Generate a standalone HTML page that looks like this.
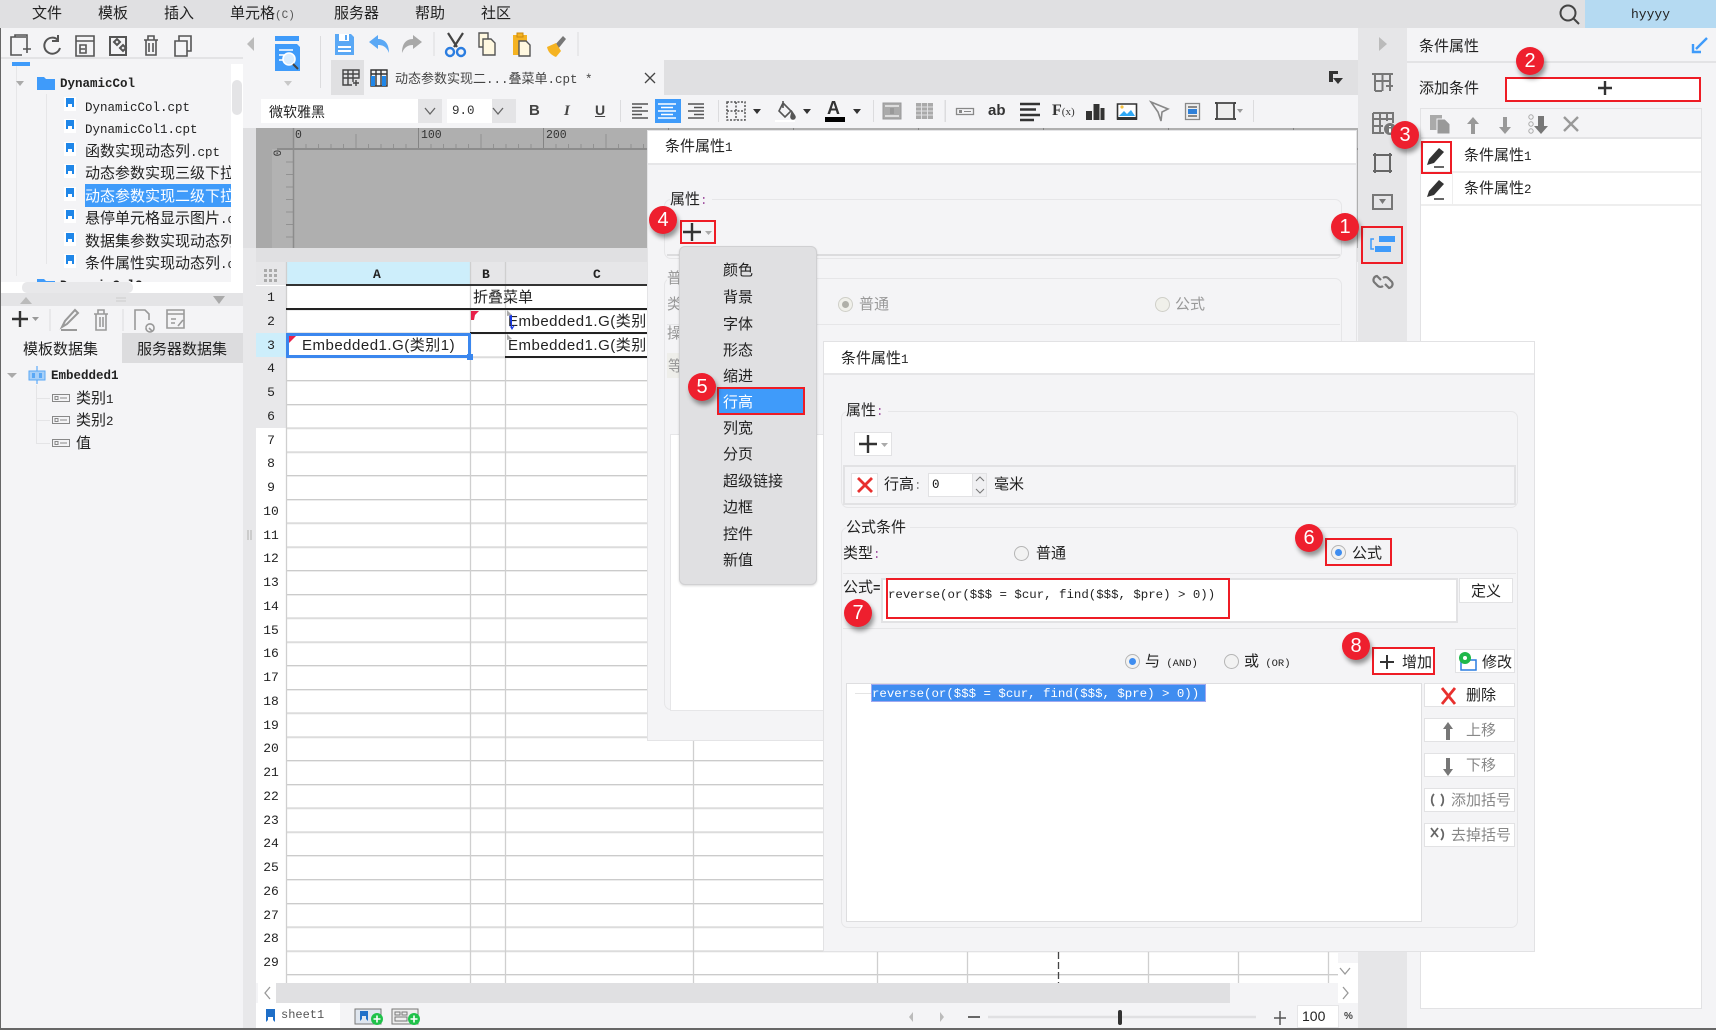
<!DOCTYPE html>
<html lang="zh">
<head>
<meta charset="utf-8">
<title>条件属性</title>
<style>
html,body{margin:0;padding:0;background:#f4f4f6;}
body{position:relative;width:1716px;height:1030px;overflow:hidden;font-family:"Liberation Sans","Noto Sans CJK SC",sans-serif;color:#222;font-size:15px;}
.a{position:absolute;box-sizing:border-box;}
.t{position:absolute;white-space:nowrap;line-height:20px;height:20px;margin-top:1px;}
.m{font-family:"Liberation Mono","Noto Sans CJK SC",monospace;font-size:12.5px;}
svg{position:absolute;overflow:visible;}
.tree{color:#222;}
.mk{position:absolute;width:28px;height:28px;border-radius:50%;background:#ee1f2e;color:#fff;font:20px/28px "Liberation Sans",sans-serif;text-align:center;box-shadow:2px 4px 5px rgba(0,0,0,.4);}
.rb{position:absolute;box-sizing:border-box;border:2px solid #ee1c25;}
.r{position:absolute;box-sizing:border-box;width:15px;height:15px;border-radius:50%;border:1px solid #b5b5b5;background:#f2f2f2;}
.r.on::after{content:"";position:absolute;left:3px;top:3px;width:7px;height:7px;border-radius:50%;background:#3f8df0;}
.r.off{border-color:#cfcfc8;background:#f0f0ea;}
.r.off.on::after{background:#b0b0a8;}
.fs{position:absolute;box-sizing:border-box;border:1px solid #e6e6e8;border-radius:7px;}
.btn{position:absolute;box-sizing:border-box;background:#fff;border:1px solid #e2e2e4;}
.sep{position:absolute;width:1px;background:#dcdcde;}
.arrow{position:absolute;width:0;height:0;border-left:4px solid transparent;border-right:4px solid transparent;border-top:5px solid #333;}
.menu div{position:absolute;left:43px;white-space:nowrap;line-height:20px;}
.rn{height:23.76px;line-height:23.76px;text-align:center;font:13px/23.76px "Liberation Mono",monospace;color:#222;}
</style>
</head>
<body>
<!-- menu bar -->
<div class="a" style="left:0;top:0;width:1716px;height:28px;background:#e0e0e2"></div>
<div class="t" style="left:32px;top:3px">文件</div>
<div class="t" style="left:98px;top:3px">模板</div>
<div class="t" style="left:164px;top:3px">插入</div>
<div class="t" style="left:230px;top:3px">单元格<span class="m" style="color:#555;font-size:11px">(C)</span></div>
<div class="t" style="left:334px;top:3px">服务器</div>
<div class="t" style="left:415px;top:3px">帮助</div>
<div class="t" style="left:481px;top:3px">社区</div>
<svg style="left:1558px;top:3px" width="24" height="22" fill="none" stroke="#444" stroke-width="2"><circle cx="10" cy="10" r="7.5"/><path d="M15 15l6 6"/></svg>
<div class="a" style="left:1585px;top:0;width:131px;height:28px;background:#b5daf2"></div>
<div class="t m" style="left:1631px;top:4px;font-size:13px;color:#222">hyyyy</div>

<!-- left panel -->
<div class="a" style="left:0;top:28px;width:243px;height:1002px;background:#f4f4f6;border-left:1px solid #666"></div>
<svg style="left:0;top:28px" width="243" height="36" fill="none" stroke="#555" stroke-width="1.6">
<g transform="translate(-2,0)"><path d="M28 9H13v18h11M17 9v-2h12v10M25 21h8M29 17v8"/>
<path d="M60 12a8 8 0 1 0 2 8M60 7v6h-6" stroke-width="2"/></g>
<path d="M76 8h18v20H76zM76 13h18M80 17h6v8h-6zM80 21h5"/>
<path d="M110 9h16v18h-16zM114 14l3-3 3 3-3 3zM120 20l3-3 3 3-3 3z" stroke-width="2"/>
<path d="M144 12h14M148 12V8h6v4M146 12v15h10V12M149 15v9M153 15v9"/>
<path d="M175 13h12v15h-12zM179 13V8h12v15h-4"/>
</svg>
<div class="a" style="left:1px;top:57px;width:242px;height:2px;background:#e3e3e5"></div>
<div class="a" style="left:231px;top:64px;width:12px;height:229px;background:#fff"></div>
<div class="a" style="left:232px;top:80px;width:10px;height:35px;border-radius:5px;background:#e4e4e6"></div>

<div class="a tree" style="left:1px;top:59px;width:230px;height:223px;overflow:hidden">
  <div class="a" style="left:11px;top:3px;width:18px;height:4px;background:#3f9bfa"></div>
  <div class="a" style="left:15px;top:7px;width:1px;height:210px;background:#e6e6e8"></div>
  <div class="arrow" style="left:15px;top:22px;border-top-color:#aaa"></div>
  <svg style="left:36px;top:16px" width="18" height="15"><path d="M0 2h7l2 2h9v11H0z" fill="#3f9bfa"/></svg>
  <div class="t m" style="left:59px;top:14px;font-weight:bold">DynamicCol</div>
  <div class="a" style="left:45px;top:35px;width:1px;height:170px;background:#e6e6e8"></div>

  <div class="a" style="left:84px;top:125px;width:146px;height:23px;background:#3f9bfa"></div>

  <div class="t" style="left:84px;top:37px"><span class="m">DynamicCol.cpt</span></div>
  <div class="t" style="left:84px;top:59px"><span class="m">DynamicCol1.cpt</span></div>
  <div class="t" style="left:84px;top:82px">函数实现动态列<span class="m">.cpt</span></div>
  <div class="t" style="left:84px;top:104px">动态参数实现三级下拉</div>
  <div class="t" style="left:84px;top:127px;color:#fff">动态参数实现二级下拉</div>
  <div class="t" style="left:84px;top:149px">悬停单元格显示图片<span class="m">.cpt</span></div>
  <div class="t" style="left:84px;top:172px">数据集参数实现动态列</div>
  <div class="t" style="left:84px;top:194px">条件属性实现动态列<span class="m">.cpt</span></div>

  <svg style="left:62px;top:38px" width="16" height="180">
    <g id="fi"><path d="M1 0h12v14H1z" fill="#fff"/><path d="M3 1h8v9H9V7H5v3H3z" fill="#1f86e8"/></g>
    <use href="#fi" y="22"/><use href="#fi" y="45"/><use href="#fi" y="67"/><use href="#fi" y="90"/><use href="#fi" y="112"/><use href="#fi" y="135"/><use href="#fi" y="157"/>
  </svg>
  <svg style="left:36px;top:218px" width="18" height="6"><path d="M0 2h7l2 2h9v2H0z" fill="#3f9bfa"/></svg>
  <div class="t m" style="left:59px;top:216px;font-weight:bold">DynamicCol2</div>
</div>
<div class="a" style="left:1px;top:282px;width:230px;height:11px;background:#fff"></div>
<div class="a" style="left:22px;top:282px;width:111px;height:11px;border-radius:5px;background:#e8e8ea"></div>
<div class="a" style="left:1px;top:293px;width:242px;height:13px;background:#e4e4e6"></div>
<svg style="left:0;top:293px" width="243" height="13"><path d="M20 11l6-7 6 7z" fill="#bbb"/><path d="M213 3h12l-6 8z" fill="#aaa"/><path d="M116 5h10M116 8h10" stroke="#ccc"/></svg>
<svg style="left:0;top:306px" width="243" height="26" fill="none" stroke="#999" stroke-width="1.6">
<path d="M12 13h16M20 5v16" stroke="#333" stroke-width="2.4"/><path d="M32 11h7l-3.5 4z" fill="#999" stroke="none"/>
<path d="M50 3v22" stroke="#ddd" stroke-width="1"/>
<path d="M62 21l3-6 10-11 3 3-11 11zM61 24h16" stroke="#999" stroke-width="2"/>
<path d="M94 8h14M98 8V4h6v4M96 8v16h10V8M100 11v10M103 11v10"/>
<path d="M123 3v22" stroke="#ddd" stroke-width="1"/>
<path d="M135 24V4h10l4 4v6M146 22a4 4 0 1 0 0-.1M149 22l3 3"/>
<path d="M167 4h17v18h-17zM167 8h17M171 13h5M171 17h4M178 20l5-6"/>
</svg>
<div class="a" style="left:122px;top:333px;width:121px;height:30px;background:#dcdcde"></div>
<div class="t" style="left:23px;top:339px;font-size:15px">模板数据集</div>
<div class="t" style="left:137px;top:339px;font-size:15px">服务器数据集</div>
<div class="arrow" style="left:7px;top:373px;border-top-color:#aaa;border-left-width:5px;border-right-width:5px"></div>
<svg style="left:28px;top:366px" width="18" height="18"><path d="M9 0v18" stroke="#3f9bfa"/><path d="M1 5h16v9H1z" fill="#a8d0f8" stroke="#5aa8f5"/><path d="M4 7h3v5H4zM11 7h3v5h-3z" fill="#5aa8f5"/></svg>
<div class="t m" style="left:51px;top:365px;font-weight:bold">Embedded1</div>
<div class="a" style="left:36px;top:385px;width:1px;height:58px;background:#e4e4e6"></div>
<div class="a" style="left:36px;top:398px;width:14px;height:1px;background:#e4e4e6"></div>
<div class="a" style="left:36px;top:420px;width:14px;height:1px;background:#e4e4e6"></div>
<div class="a" style="left:36px;top:443px;width:14px;height:1px;background:#e4e4e6"></div>
<svg style="left:52px;top:393px" width="18" height="56" fill="none" stroke="#888"><path d="M.5 1.5h17v7H.5zM3 3.5h3v3H3zM8 5h7" /><path d="M.5 23.500h17v7H.5zM3 25.500h3v3H3zM8 27h7"/><path d="M.5 46.500h17v7H.5zM3 48.500h3v3H3zM8 50h7"/></svg>
<div class="t" style="left:76px;top:388px">类别<span class="m">1</span></div>
<div class="t" style="left:76px;top:410px">类别<span class="m">2</span></div>
<div class="t" style="left:76px;top:433px">值</div>

<!-- left collapse + top tool row -->
<div class="a" style="left:243px;top:28px;width:1116px;height:100px;background:#f4f4f6"></div>
<svg style="left:244px;top:36px" width="14" height="16"><path d="M10 1v14L3 8z" fill="#bbb"/></svg>
<svg style="left:272px;top:36px" width="32" height="52">
<path d="M3 0h24v5H3z" fill="#3f9bfa"/><path d="M3 8h22l3 3v24H3z" fill="#3f9bfa"/>
<path d="M7 14h14M7 19h7M7 24h5" stroke="#fff" stroke-width="1.6"/>
<circle cx="17" cy="23" r="6" fill="#d8ecff" stroke="#fff" stroke-width="1.6"/><path d="M21 28l5 5" stroke="#444" stroke-width="2"/>
<path d="M12 45h8l-4 5z" fill="#c8c8c8"/>
</svg>
<div class="sep" style="left:320px;top:36px;height:52px"></div>
<svg style="left:332px;top:32px" width="250" height="26">
<path d="M3 2h16l3 3v18H3z" fill="#5aa8f5"/><path d="M7 2h10v7H7z" fill="#fff"/><path d="M13 3h2v5h-2z" fill="#5aa8f5"/><path d="M6 14h13v2H6zM6 18h13v2H6z" fill="#fff"/>
<path d="M37 10l9-7v4c8 0 11 6 11 14-2-5-5-8-11-8v4z" fill="#5aa8f5"/>
<path d="M90 10l-9-7v4c-8 0-11 6-11 14 2-5 5-8 11-8v4z" fill="#a8a8a8"/>
<path d="M102 0v24" stroke="#ddd"/>
<path d="M116 1l9 14M131 1l-9 14" stroke="#444" stroke-width="2.2" fill="none"/><circle cx="118" cy="20" r="4" fill="none" stroke="#2b7de0" stroke-width="2.400"/><circle cx="129" cy="20" r="4" fill="none" stroke="#2b7de0" stroke-width="2.400"/>
<path d="M147 1h9v14h-9z" fill="#fff8e0" stroke="#555" stroke-width="1.4"/><path d="M151 7h8l4 4v12h-12z" fill="#fff8e0" stroke="#555" stroke-width="1.4"/>
<path d="M181 3h14v20h-14z" fill="#f5b322"/><path d="M185 1h6v4h-6z" fill="#f5b322" stroke="#c98a10"/><path d="M187 9h7l4 4v11h-11z" fill="#fff8e0" stroke="#555" stroke-width="1.4"/>
<path d="M222 14l9-10 3 3-8 10z" fill="#777"/><path d="M215 15l9-4 5 8-5 6c-5-2-8-5-9-10z" fill="#f5b322"/>
<path d="M246 0v24" stroke="#ddd"/>
</svg>

<!-- tab bar -->
<div class="a" style="left:331px;top:60px;width:1031px;height:35px;background:#e0e0e2"></div>
<div class="a" style="left:364px;top:60px;width:300px;height:35px;background:#f4f4f6"></div>
<svg style="left:342px;top:68px" width="54" height="20" fill="none" stroke="#444" stroke-width="1.400"><path d="M1 2h16v8H1zM1 6h16M6 2v15M11 2v12M1 10v7h9M11 15h6M14 12v6"/><path d="M29 2h16v16H29zM29 6h16M34 2v16M39 2v16" stroke="#333"/><path d="M29 8h4v10h-4zM40 8h4v10h-4z" fill="#1f86e8" stroke="none"/></svg>
<div class="t" style="left:395px;top:68px;font-size:13px;color:#444">动态参数实现二<span class="m">...</span>叠菜单<span class="m">.cpt *</span></div>
<svg style="left:645px;top:73px" width="10" height="10" stroke="#444" stroke-width="1.300"><path d="M0 0l10 10M10 0L0 10"/></svg>
<svg style="left:1328px;top:71px" width="16" height="14"><path d="M1 0h9v3H5v8H1z" fill="#333"/><path d="M5 7h10l-5 6z" fill="#333"/></svg>

<!-- format toolbar -->
<div class="a" style="left:243px;top:95px;width:1116px;height:33px;background:#f4f4f6"></div>
<div class="a" style="left:261px;top:99px;width:181px;height:24px;background:#fff"></div>
<div class="a" style="left:418px;top:99px;width:24px;height:24px;background:#e4e4e6"></div>
<div class="t" style="left:269px;top:101px;font-size:14px">微软雅黑</div>
<div class="a" style="left:447px;top:99px;width:69px;height:24px;background:#fff"></div>
<div class="a" style="left:492px;top:99px;width:24px;height:24px;background:#e4e4e6"></div>
<div class="t m" style="left:452px;top:100px;color:#333">9.0</div>
<svg style="left:424px;top:107px" width="90" height="8" fill="none" stroke="#666" stroke-width="1.300"><path d="M1 1l5 6 5-6M69 1l5 6 5-6"/></svg>
<div class="t" style="left:529px;top:100px;font:bold 15px/20px 'Liberation Sans';color:#444">B</div>
<div class="t" style="left:564px;top:100px;font:italic bold 15px/20px 'Liberation Serif';color:#444">I</div>
<div class="t" style="left:595px;top:99px;font:bold 14px/20px 'Liberation Sans';color:#444;text-decoration:underline">U</div>
<div class="sep" style="left:620px;top:100px;height:22px"></div>
<div class="a" style="left:655px;top:99px;width:26px;height:24px;background:#3f9bfa"></div>
<svg style="left:632px;top:103px" width="76" height="16" stroke-width="1.500" fill="none">
<path d="M0 1h16M0 4.500h10M0 8h16M0 11.500h10M0 15h16" stroke="#555"/>
<path d="M26 1h18M29 4.500h12M26 8h18M29 11.500h12M26 15h18" stroke="#fff"/>
<path d="M56 1h16M62 4.500h10M56 8h16M62 11.500h10M56 15h16" stroke="#555"/>
</svg>
<div class="sep" style="left:718px;top:100px;height:22px"></div>
<svg style="left:726px;top:101px" width="20" height="20" fill="none" stroke="#555" stroke-dasharray="2 1.500" stroke-width="1.500"><path d="M1 1h18v18H1zM10 1v18M1 10h18"/></svg>
<div class="arrow" style="left:753px;top:109px"></div>
<svg style="left:775px;top:100px" width="22" height="22" fill="none" stroke="#555" stroke-width="1.600"><path d="M8 3l8 8-6 6-6-6zM8 1v7"/><path d="M17 12c2 3 3 4 3 5a2 2 0 0 1-4 0c0-1 .5-2 1-5z" fill="#555"/></svg>
<div class="a" style="left:775px;top:120px;width:20px;height:2px;background:#fff"></div>
<div class="arrow" style="left:803px;top:109px"></div>
<div class="t" style="left:827px;top:97px;font:bold 18px/20px 'Liberation Sans';color:#333">A</div>
<div class="a" style="left:825px;top:117px;width:20px;height:5px;background:#000"></div>
<div class="arrow" style="left:853px;top:109px"></div>
<div class="sep" style="left:873px;top:100px;height:22px"></div>
<svg style="left:883px;top:103px" width="370" height="20">
<path d="M0 0h18v16H0z" fill="#aaa" stroke="#999"/><path d="M2 2h14v2H2zM2 12h14v2H2z" fill="#ddd"/><path d="M7 5h4v6H7z" fill="#999"/>
<path d="M33 0h17v16H33z" fill="#aaa"/><path d="M38.500 0v16M44.500 0v16M33 4h17M33 8h17M33 12h17" stroke="#e0e0e2"/>
<path d="M62 -3v22" stroke="#ddd"/>
<path d="M73.500 5.500h17v6h-17z" fill="none" stroke="#888" stroke-width="1.300"/><path d="M76 7h3v3h-3zM81 8h7v1h-7z" fill="#888"/>
<path d="M137 1h20M137 6.500h16M137 12h20M137 17h14" stroke="#333" stroke-width="2.400"/>
<path d="M203 8h6v9h-6zM210.500 1h6v16h-6zM217.500 5h4v12h-4z" fill="#333"/>
<path d="M234.500 1h19v15h-19z" fill="#fff" stroke="#333" stroke-width="1.600"/><path d="M236 13l5-5 3 3 4-4 4 6z" fill="#2fa8f5"/><circle cx="239" cy="4" r="1.600" fill="#f5c242"/><path d="M234 14h20v3h-20z" fill="#333"/>
<path d="M268 -1l17 7-6 3-1 9-3-9z" fill="none" stroke="#888" stroke-width="1.600"/>
<path d="M302.500 .5h14v16h-14z" fill="#eee" stroke="#888" stroke-width="1.300"/><path d="M305 3h9v2h-9zM305 12h9v2h-9z" fill="#888"/><path d="M305 6h9v5h-9z" fill="#2f80d8"/>
<path d="M334 0h17v16h-17z" fill="#eee" stroke="#444" stroke-width="1.800"/><path d="M332 -1h2v2h-2zM351 -1h2v2h-2zM332 15h2v2h-2zM351 15h2v2h-2z" fill="#444"/><path d="M354 6h6l-3 4z" fill="#999"/>
</svg>
<div class="t" style="left:988px;top:100px;font:bold 15px/20px 'Liberation Sans';color:#333">ab</div>
<div class="t" style="left:1052px;top:100px;font:bold 16px/20px 'Liberation Serif';color:#333">F<span style="font-size:11px;font-weight:normal">(x)</span></div>
<div class="sep" style="left:945px;top:100px;height:22px"></div>
<div class="sep" style="left:1253px;top:100px;height:22px"></div>

<!-- design area -->
<div class="a" style="left:243px;top:128px;width:1116px;height:134px;background:#e0e0e2"></div>
<div class="a" style="left:256px;top:128px;width:1103px;height:120px;background:#afafaf"></div>
<div class="a" style="left:256px;top:128px;width:37px;height:120px;background:#a9a9a9"></div>
<div class="a" style="left:272px;top:149px;width:21px;height:99px;background:#b2b2b2"></div>
<svg style="left:272px;top:128px" width="1087" height="120">
<defs>
<pattern id="rt" width="12.500" height="21" patternUnits="userSpaceOnUse"><path d="M.5 16v5" stroke="#929292"/></pattern>
<pattern id="rm" width="62.500" height="21" patternUnits="userSpaceOnUse"><path d="M.5 6v15" stroke="#929292"/></pattern>
<pattern id="rl" width="125" height="21" patternUnits="userSpaceOnUse"><path d="M.5 0v21" stroke="#848484"/></pattern>
<pattern id="rv" width="21" height="12.500" patternUnits="userSpaceOnUse" y="21"><path d="M14 .5h7" stroke="#929292"/></pattern>
</defs>
<g transform="translate(21,0)"><rect width="1066" height="21" fill="url(#rt)"/><rect width="1066" height="21" fill="url(#rm)"/><rect width="1066" height="21" fill="url(#rl)"/></g>
<rect x="0" y="21" width="21" height="99" fill="url(#rv)"/>
<path d="M5 21h1082" stroke="#8c8c8c" stroke-width="2"/><path d="M21.500 0v120" stroke="#8c8c8c" stroke-width="1.500"/>
</svg>
<div class="t m" style="left:295px;top:125px;font-size:11.500px;color:#333">0</div>
<div class="t m" style="left:421px;top:125px;font-size:11.500px;color:#333">100</div>
<div class="t m" style="left:546px;top:125px;font-size:11.500px;color:#333">200</div>
<div class="t m" style="left:272px;top:142px;font-size:11px;color:#333;transform:rotate(-90deg);width:14px;text-align:center">0</div>

<!-- strip left of grid -->
<div class="a" style="left:243px;top:248px;width:13px;height:782px;background:#e8e8ea"></div>
<div class="a" style="left:247px;top:530px;width:2px;height:10px;background:#ccc"></div>
<div class="a" style="left:250px;top:530px;width:2px;height:10px;background:#ccc"></div>

<!-- grid -->
<div class="a" style="left:256px;top:262px;width:1082px;height:721px;background:#fff"></div>
<div class="a" style="left:256px;top:262px;width:1082px;height:23px;background:#e6e6e8"></div>
<div class="a" style="left:286px;top:262px;width:184px;height:23px;background:#cdeefb"></div>
<div class="a" style="left:286px;top:286.700px;width:1052px;height:696px;background-image:repeating-linear-gradient(180deg,transparent 0,transparent 21.760px,#cbcbcb 21.760px,#cbcbcb 22.760px,#ececec 22.760px,#ececec 23.760px)"></div>
<div class="a" style="left:256px;top:285.700px;width:30px;height:142.600px;background:#e8e8ea"></div>
<div class="a" style="left:256px;top:333.200px;width:30px;height:24px;background:#cdeefb"></div>
<svg style="left:286px;top:262px" width="1052" height="721" stroke="#cfcfcf" fill="none" stroke-width="1.300"><path d="M.5 0v721M184.500 0v721M219.500 0v721M407.500 0v721M591.500 0v721M681.500 0v721M862.500 0v721M952.500 0v721M1042.500 0v721"/><path d="M772.500 0v721" stroke="#444" stroke-dasharray="7 3"/></svg>
<div class="a" style="left:256px;top:286.200px;width:30px"><div class="rn">1</div><div class="rn">2</div><div class="rn">3</div><div class="rn">4</div><div class="rn">5</div><div class="rn">6</div><div class="rn">7</div><div class="rn">8</div><div class="rn">9</div><div class="rn">10</div><div class="rn">11</div><div class="rn">12</div><div class="rn">13</div><div class="rn">14</div><div class="rn">15</div><div class="rn">16</div><div class="rn">17</div><div class="rn">18</div><div class="rn">19</div><div class="rn">20</div><div class="rn">21</div><div class="rn">22</div><div class="rn">23</div><div class="rn">24</div><div class="rn">25</div><div class="rn">26</div><div class="rn">27</div><div class="rn">28</div><div class="rn">29</div></div>
<svg style="left:256px;top:262px" width="30" height="23"><g fill="#aaa"><rect x="8" y="7" width="3" height="3"/><rect x="13" y="7" width="3" height="3"/><rect x="18" y="7" width="3" height="3"/><rect x="8" y="12" width="3" height="3"/><rect x="13" y="12" width="3" height="3"/><rect x="18" y="12" width="3" height="3"/><rect x="8" y="17" width="3" height="3"/><rect x="13" y="17" width="3" height="3"/><rect x="18" y="17" width="3" height="3"/></g></svg>
<div class="t m" style="left:373px;top:264px;font-size:13px;font-weight:bold">A</div>
<div class="t m" style="left:482px;top:264px;font-size:13px;font-weight:bold">B</div>
<div class="t m" style="left:593px;top:264px;font-size:13px;font-weight:bold">C</div>
<div class="a" style="left:286px;top:284px;width:1052px;height:2px;background:#333"></div>
<div class="a" style="left:286px;top:308px;width:365px;height:2px;background:#222"></div>
<div class="a" style="left:470px;top:332px;width:181px;height:2px;background:#222"></div>
<div class="a" style="left:505px;top:356px;width:146px;height:2px;background:#222"></div>
<div class="t" style="left:473px;top:287px;font-size:15px">折叠菜单</div>
<div class="t" style="left:508px;top:311px;font-size:15px;letter-spacing:.5px;width:140px;overflow:hidden">Embedded1.G(类别1)</div>
<div class="t" style="left:508px;top:335px;font-size:15px;letter-spacing:.5px;width:140px;overflow:hidden">Embedded1.G(类别1)</div>
<div class="a" style="left:286px;top:333px;width:185px;height:25px;border:3px solid #3b87ee;background:#fff"></div>
<div class="a" style="left:467px;top:354px;width:6px;height:6px;background:#3b87ee"></div>
<div class="t" style="left:302px;top:335px;font-size:15px;letter-spacing:.5px">Embedded1.G(类别1)</div>
<svg style="left:286px;top:310px" width="240" height="50"><path d="M3 26h7l-7 7z" fill="#e8204a"/><path d="M185 1h8l-4 4-1 5-3 0z" fill="#e8204a"/><path d="M223 3l3 2v12l3-2-3 5-3-5 2 2z" fill="#1a3ae8"/><path d="M221 0l5 5-5 1zM221 24l5 5-5 1z" fill="#aaa"/></svg>

<!-- scrollbars bottom -->
<div class="a" style="left:256px;top:983px;width:1102px;height:20px;background:#f4f4f6"></div>
<div class="a" style="left:258px;top:983px;width:18px;height:20px;background:#fff"></div>
<div class="a" style="left:276px;top:983px;width:954px;height:20px;background:#e0e0e2"></div>
<div class="a" style="left:1338px;top:963px;width:20px;height:40px;background:#fff"></div>
<svg style="left:262px;top:986px" width="1095" height="14" fill="none" stroke="#999" stroke-width="1.300"><path d="M8 1l-5 6 5 6M1081 1l5 6-5 6"/><path d="M1078 -18l5 6 5-6"/></svg>
<div class="a" style="left:1358px;top:28px;width:49px;height:1002px;background:#e6e6e8"></div>
<div class="a" style="left:256px;top:1003px;width:1102px;height:25px;background:#f4f4f6"></div>
<div class="a" style="left:256px;top:1003px;width:84px;height:25px;background:#fff"></div>
<svg style="left:265px;top:1009px" width="12" height="14"><path d="M1 0h9v13L8 11V8H3v3l-2 2z" fill="#1f6fc8"/></svg>
<div class="t m" style="left:281px;top:1004px;font-size:12px;color:#555">sheet1</div>
<svg style="left:354px;top:1007px" width="68" height="18"><path d="M1 2h26v15H1z" fill="#dfe6ef" stroke="#777"/><path d="M6 4h8v10l-2-2v-3h-4v3l-2 2z" fill="#1f6fc8"/><circle cx="23" cy="12" r="6" fill="#1fc24a"/><path d="M23 8.500v7M19.500 12h7" stroke="#fff" stroke-width="1.600"/><path d="M38 2h26v15H38z" fill="#eee" stroke="#777"/><path d="M41 5h5v3h-5zM48 5h5v3h-5zM41 10h12v4H41z" fill="none" stroke="#777"/><circle cx="60" cy="12" r="6" fill="#1fc24a"/><path d="M60 8.500v7M56.500 12h7" stroke="#fff" stroke-width="1.600"/></svg>
<svg style="left:905px;top:1008px" width="385" height="20"><path d="M8 4v10L4 9zM35 4v10l4-5z" fill="#bbb"/><path d="M63 9h12" stroke="#666" stroke-width="2"/><path d="M83 9h268" stroke="#e0e0e2" stroke-width="2.500"/><rect x="213" y="2" width="4" height="15" rx="2" fill="#333"/><path d="M375 3v14M369 10h12" stroke="#555" stroke-width="1.500"/></svg>
<div class="a" style="left:1297px;top:1005px;width:42px;height:23px;background:#fff;border:1px solid #e6e6e8"></div>
<div class="t" style="left:1302px;top:1005px;font-size:14px">100</div>
<div class="t" style="left:1344px;top:1006px;font-size:10px;font-weight:bold;color:#444">%</div>
<div class="a" style="left:0;top:1028px;width:1716px;height:2px;background:#666"></div>

<!-- right strip icons -->
<svg style="left:1376px;top:36px" width="16" height="16"><path d="M3 1v14l8-7z" fill="#bbb"/></svg>
<svg style="left:1372px;top:70px" width="26" height="225" fill="none" stroke="#777" stroke-width="2">
<path d="M0 4h21M3 4v7h15V4M3 11v10M10.500 4v17M18 11v10M3 21h7M14 16h7" />
<g transform="translate(0,7)"><path d="M1 36h20v10M1 36v20h11M1 42h20M8 36v20M15 36v8M1 49h10"/><circle cx="18" cy="52" r="6" fill="#777" stroke="none"/><path d="M18 49v1M18 51.500v4" stroke="#fff"/></g>
<g transform="translate(0,6)"><path d="M3 79h15v16H3zM1 79h4M16 79h4M1 95h4M16 95h4M3 77v4M18 77v4M3 93v4M18 93v4" stroke="#666"/></g>
<g transform="translate(0,6)"><path d="M1 119h19v14H1z"/><path d="M7 123h7l-3.500 5z" fill="#777" stroke="none"/></g>
</svg>
<div class="rb" style="left:1361px;top:226px;width:42px;height:38px"></div>
<svg style="left:1370px;top:235px" width="26" height="18"><path d="M9 1h16v6H9zM5 11h16v6H5z" fill="#3f9bfa"/><path d="M4 4H1v10h3" fill="none" stroke="#3f9bfa" stroke-width="1.500"/></svg>
<svg style="left:1371px;top:270px" width="24" height="24" fill="none" stroke="#777" stroke-width="2.200"><path d="M10 10L6 6a4 4 0 0 0-3 6l4 4a4 4 0 0 0 5 0M14 14l4 4a4 4 0 0 0 3-6l-4-4a4 4 0 0 0-5 0"/></svg>

<!-- right panel -->
<div class="a" style="left:1407px;top:28px;width:309px;height:1000px;background:#f4f4f6"></div>
<div class="a" style="left:1407px;top:61px;width:309px;height:2px;background:#e3e3e5"></div>
<div class="t" style="left:1419px;top:36px;font-size:15px">条件属性</div>
<svg style="left:1692px;top:37px" width="16" height="16"><path d="M15 1L4 12M1 7v8h8" stroke="#3f9bfa" stroke-width="2.400" fill="none"/></svg>
<div class="t" style="left:1419px;top:78px;font-size:15px">添加条件</div>
<div class="a" style="left:1505px;top:77px;width:196px;height:25px;background:#fff;border:2px solid #ee1c25"></div>
<svg style="left:1597px;top:80px" width="16" height="16"><path d="M8 1v14M1 8h14" stroke="#333" stroke-width="2.400"/></svg>
<div class="a" style="left:1420px;top:108px;width:282px;height:901px;background:#fff;border:1px solid #e2e2e4"></div>
<div class="a" style="left:1421px;top:109px;width:280px;height:30px;background:#f4f4f6;border-bottom:2px solid #e4e4e6"></div>
<svg style="left:1428px;top:113px" width="160" height="22"><path d="M2 2h12v15H2z" fill="#aaa"/><path d="M9 6h8l5 5v10H9z" fill="#999" stroke="#f4f4f6"/><path d="M45 4l-6 7h4v10h4V11h4z" fill="#999"/><path d="M77 21l-6-7h4V4h4v10h4z" fill="#999"/><circle cx="103" cy="4" r="2.200" fill="none" stroke="#aaa"/><circle cx="103" cy="11" r="2.200" fill="none" stroke="#aaa"/><circle cx="103" cy="18" r="2.200" fill="none" stroke="#aaa"/><path d="M113 21l-7-8h4V3h6v10h4z" fill="#777"/><path d="M136 4l14 14M150 4l-14 14" stroke="#999" stroke-width="2.400"/></svg>
<div class="a" style="left:1421px;top:171px;width:280px;height:2px;background:#eee"></div>
<div class="a" style="left:1421px;top:204px;width:280px;height:2px;background:#eee"></div>
<div class="a" style="left:1452px;top:173px;width:1px;height:31px;background:#eee"></div>
<div class="rb" style="left:1421px;top:141px;width:31px;height:33px"></div>
<svg style="left:1426px;top:146px" width="22" height="54"><g id="pen"><path d="M1 19l2-6 10-11 5 4-10 11z" fill="#333"/><path d="M8 21h10" stroke="#333" stroke-width="1.500"/></g><use href="#pen" y="32"/></svg>
<div class="t" style="left:1464px;top:145px;font-size:15px">条件属性<span class="m">1</span></div>
<div class="t" style="left:1464px;top:178px;font-size:15px">条件属性<span class="m">2</span></div>

<!-- dialog 1 -->
<div class="a" style="left:647px;top:130px;width:710px;height:611px;background:#f4f4f6;border:1px solid #e4e4e6"></div>
<div class="a" style="left:648px;top:131px;width:708px;height:34px;background:#fff;border-bottom:2px solid #e6e6e8"></div>
<div class="t" style="left:665px;top:136px;font-size:15px">条件属性<span class="m">1</span></div>
<div class="fs" style="left:664px;top:199px;width:678px;height:60px"></div>
<div class="a" style="left:667px;top:254px;width:673px;height:2px;background:#dcdcde"></div>
<div class="t" style="left:670px;top:189px;background:#f4f4f6;padding-right:4px;font-size:15px">属性<span class="m" style="color:#a050a0">:</span></div>
<div class="rb" style="left:680px;top:220px;width:36px;height:24px"></div>
<svg style="left:683px;top:223px" width="30" height="18"><path d="M9 0v18M0 9h18" stroke="#333" stroke-width="2.400"/><path d="M22 8h7l-3.500 4z" fill="#aaa"/></svg>
<div class="fs" style="left:664px;top:278px;width:678px;height:432px"></div>
<div class="t" style="left:667px;top:268px;background:#f4f4f6;font-size:15px;color:#999">普通条件</div>
<div class="t" style="left:667px;top:294px;font-size:15px;color:#999">类型</div>
<div class="t" style="left:667px;top:323px;font-size:15px;color:#999">操作符</div>
<div class="a" style="left:667px;top:324px;width:673px;height:1px;background:#e6e6e8"></div>
<div class="a" style="left:667px;top:353px;width:60px;height:25px;background:#eeeeea"></div>
<div class="t" style="left:668px;top:356px;font-size:15px;color:#999">等于</div>
<div class="r off on" style="left:838px;top:297px"></div>
<div class="t" style="left:859px;top:294px;font-size:15px;color:#999">普通</div>
<div class="r off" style="left:1155px;top:297px"></div>
<div class="t" style="left:1175px;top:294px;font-size:15px;color:#999">公式</div>
<div class="a" style="left:670px;top:434px;width:155px;height:277px;background:#fff;border:1px solid #e6e6e8"></div>

<!-- dropdown menu -->
<div class="a menu" style="left:679px;top:246px;width:138px;height:339px;background:#e0e0e2;border:1px solid #d0d0d2;border-radius:6px;box-shadow:0 1px 2px rgba(0,0,0,.15)">
<div style="top:14px">颜色</div>
<div style="top:41px">背景</div>
<div style="top:68px">字体</div>
<div style="top:94px">形态</div>
<div style="top:120px">缩进</div>
<div style="top:172px">列宽</div>
<div style="top:198px">分页</div>
<div style="top:225px">超级链接</div>
<div style="top:251px">边框</div>
<div style="top:278px">控件</div>
<div style="top:304px">新值</div>
</div>
<div class="a" style="left:717px;top:387px;width:88px;height:28px;background:#3f9bfa;border:2px solid #ee1c25"></div>
<div class="t" style="left:723px;top:392px;color:#fff">行高</div>

<!-- dialog 2 -->
<div class="a" style="left:823px;top:341px;width:712px;height:611px;background:#f4f4f6;border:1px solid #e2e2e4"></div>
<div class="a" style="left:824px;top:342px;width:710px;height:33px;background:#fff;border-bottom:2px solid #e6e6e8"></div>
<div class="t" style="left:841px;top:348px;font-size:15px">条件属性<span class="m">1</span></div>
<div class="fs" style="left:841px;top:411px;width:677px;height:97px"></div>
<div class="t" style="left:846px;top:400px;background:#f4f4f6;padding-right:4px;font-size:15px">属性<span class="m" style="color:#a050a0">:</span></div>
<div class="btn" style="left:854px;top:432px;width:38px;height:24px"></div>
<svg style="left:859px;top:435px" width="30" height="18"><path d="M9 0v18M0 9h18" stroke="#333" stroke-width="2.400"/><path d="M22 8h7l-3.500 4z" fill="#aaa"/></svg>
<div class="a" style="left:843px;top:465px;width:673px;height:40px;border:2px solid #e2e2e4"></div>
<div class="btn" style="left:851px;top:473px;width:27px;height:24px"></div>
<svg style="left:857px;top:477px" width="16" height="16"><path d="M1 1l14 14M15 1L1 15" stroke="#e8302e" stroke-width="2.800"/></svg>
<div class="t" style="left:884px;top:474px;font-size:15px">行高<span class="m" style="color:#888">:</span></div>
<div class="a" style="left:928px;top:473px;width:59px;height:24px;background:#fff;border:1px solid #e2e2e4"></div>
<div class="a" style="left:972px;top:473px;width:15px;height:24px;background:#f0f0f2;border:1px solid #e2e2e4"></div>
<div class="t m" style="left:932px;top:474px;color:#111">0</div>
<svg style="left:975px;top:476px" width="10" height="18" fill="none" stroke="#777"><path d="M1 5l4-4 4 4M1 13l4 4 4-4"/></svg>
<div class="t" style="left:994px;top:474px;font-size:15px">毫米</div>

<div class="fs" style="left:841px;top:527px;width:677px;height:401px"></div>
<div class="t" style="left:846px;top:517px;background:#f4f4f6;padding-right:4px;font-size:15px">公式条件</div>
<div class="t" style="left:843px;top:543px;font-size:15px">类型<span class="m" style="color:#a050a0">:</span></div>
<div class="r" style="left:1014px;top:546px"></div>
<div class="t" style="left:1036px;top:543px;font-size:15px">普通</div>
<div class="rb" style="left:1325px;top:538px;width:67px;height:28px"></div>
<div class="r on" style="left:1331px;top:545px"></div>
<div class="t" style="left:1352px;top:543px;font-size:15px">公式</div>
<div class="a" style="left:843px;top:573px;width:673px;height:1px;background:#e6e6e8"></div>
<div class="t" style="left:843px;top:577px;font-size:15px">公式<span class="m" style="font-weight:bold">=</span></div>
<div class="a" style="left:881px;top:578px;width:577px;height:45px;background:#fff;border:2px solid #e2e2e4"></div>
<div class="a" style="left:886px;top:578px;width:344px;height:41px;border:2px solid #ee1c25"></div>
<div class="t m" style="left:888px;top:584px;font-size:12.400px;color:#222;white-space:pre">reverse(or($$$ = $cur, find($$$, $pre) &gt; 0))</div>
<div class="btn" style="left:1459px;top:578px;width:54px;height:25px"></div>
<div class="t" style="left:1471px;top:581px;font-size:15px">定义</div>
<div class="a" style="left:843px;top:628px;width:673px;height:1px;background:#e6e6e8"></div>
<div class="r on" style="left:1125px;top:654px"></div>
<div class="t" style="left:1145px;top:651px;font-size:15px">与<span class="m" style="font-size:10.500px"> (AND)</span></div>
<div class="r" style="left:1224px;top:654px"></div>
<div class="t" style="left:1244px;top:651px;font-size:15px">或<span class="m" style="font-size:10.500px"> (OR)</span></div>
<div class="a" style="left:1372px;top:647px;width:63px;height:28px;background:#fff;border:2px solid #ee1c25"></div>
<svg style="left:1379px;top:654px" width="16" height="16"><path d="M8 1v14M1 8h14" stroke="#333" stroke-width="2"/></svg>
<div class="t" style="left:1402px;top:652px;font-size:15px">增加</div>
<div class="btn" style="left:1455px;top:649px;width:60px;height:24px"></div>
<svg style="left:1458px;top:651px" width="20" height="20"><path d="M3 9h15v10H3z" fill="#fff" stroke="#2b7de0" stroke-width="1.500"/><circle cx="7" cy="7" r="6" fill="#1fb84a"/><circle cx="7" cy="7" r="2" fill="#fff"/></svg>
<div class="t" style="left:1482px;top:652px;font-size:15px">修改</div>
<div class="a" style="left:846px;top:683px;width:576px;height:239px;background:#fff;border:1px solid #dedee0"></div>
<div class="a" style="left:855px;top:693px;width:16px;height:1px;background:#e4e4e4"></div>
<div class="a" style="left:871px;top:684px;width:335px;height:18px;background:#3f8df0;border:1px solid #a0a8f0"></div>
<div class="t m" style="left:872px;top:683px;font-size:12.400px;color:#fff;white-space:pre">reverse(or($$$ = $cur, find($$$, $pre) &gt; 0))</div>
<div class="btn" style="left:1424px;top:683px;width:91px;height:24px"></div>
<div class="btn" style="left:1424px;top:718px;width:91px;height:24px"></div>
<div class="btn" style="left:1424px;top:753px;width:91px;height:24px"></div>
<div class="btn" style="left:1424px;top:788px;width:91px;height:24px"></div>
<div class="btn" style="left:1424px;top:823px;width:91px;height:24px"></div>
<svg style="left:1440px;top:686px" width="18" height="158">
<path d="M2 2l13 16M15 2L2 18" stroke="#e8302e" stroke-width="2.800"/>
<path d="M8 36l-5 7h3v11h4V43h3z" fill="#777"/>
<path d="M8 90l-5-7h3V72h4v11h3z" fill="#777"/>
</svg>
<div class="t" style="left:1466px;top:685px;font-size:15px">删除</div>
<div class="t" style="left:1466px;top:720px;font-size:15px;color:#888">上移</div>
<div class="t" style="left:1466px;top:755px;font-size:15px;color:#888">下移</div>
<div class="t" style="left:1451px;top:790px;font-size:15px;color:#888">添加括号</div>
<div class="t" style="left:1451px;top:825px;font-size:15px;color:#888">去掉括号</div>
<svg style="left:1429px;top:792px" width="20" height="50" fill="none" stroke="#666" stroke-width="1.800"><path d="M5 2c-3 3-3 9 0 12M12 2c3 3 3 9 0 12"/><path d="M2 36l7 9M9 36l-7 9M12 37c3 3 3 8 0 11" /></svg>

<!-- markers -->
<div class="mk" style="left:1331px;top:213px">1</div>
<div class="mk" style="left:1516px;top:47px">2</div>
<div class="mk" style="left:1391px;top:121px">3</div>
<div class="mk" style="left:649px;top:206px">4</div>
<div class="mk" style="left:688px;top:373px">5</div>
<div class="mk" style="left:1295px;top:524px">6</div>
<div class="mk" style="left:844px;top:599px">7</div>
<div class="mk" style="left:1342px;top:632px">8</div>
</body>
</html>
